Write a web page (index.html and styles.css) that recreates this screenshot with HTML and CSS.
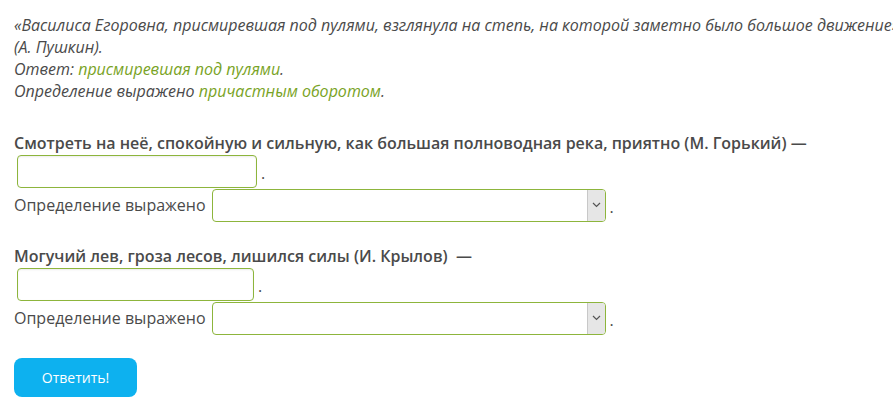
FILE: index.html
```html
<!DOCTYPE html>
<html lang="ru">
<head>
    <meta charset="UTF-8">
    <title>Определение</title>
    <link rel="stylesheet" href="styles.css">
</head>
<body>
    <div class="task">
        <p class="example">
            <span class="quote">«Василиса Егоровна, присмиревшая под пулями, взглянула на степь, на которой заметно было большое движение»</span><br>
            (А. Пушкин).<br>
            Ответ: <span class="green">присмиревшая под пулями</span>.<br>
            Определение выражено <span class="green">причастным оборотом</span>.
        </p>

        <div class="question">
            <p class="q-text">Смотреть на неё, спокойную и сильную, как большая полноводная река, приятно (М. Горький) —</p>
            <div class="row">
                <span class="field"></span><span class="dot">.</span>
            </div>
            <div class="row">
                <span class="label">Определение выражено</span>
                <span class="select"><span class="arrow"><svg width="9" height="6" viewBox="0 0 9 6"><path d="M1 1l3.5 3.5L8 1" fill="none" stroke="#555" stroke-width="1.2"/></svg></span></span><span class="dot">.</span>
            </div>
        </div>

        <div class="question second">
            <p class="q-text">Могучий лев, гроза лесов, лишился силы (И. Крылов)&nbsp; —</p>
            <div class="row">
                <span class="field short"></span><span class="dot">.</span>
            </div>
            <div class="row">
                <span class="label">Определение выражено</span>
                <span class="select"><span class="arrow"><svg width="9" height="6" viewBox="0 0 9 6"><path d="M1 1l3.5 3.5L8 1" fill="none" stroke="#555" stroke-width="1.2"/></svg></span></span><span class="dot">.</span>
            </div>
        </div>

        <button class="submit">Ответить!</button>
    </div>
</body>
</html>
```

FILE: styles.css
```css
body {
    margin: 0;
    font-family: "Open Sans", Arial, sans-serif;
    font-size: 16px;
    color: #4a4a4a;
    background: #fff;
    overflow: hidden;
}
.task {
    padding: 14px 0 0 14px;
}
.example {
    margin: 0;
    font-style: italic;
    line-height: 22px;
}
.quote {
    white-space: nowrap;
}
.green {
    color: #79a325;
}
.question {
    margin-top: 30px;
}
.question.second {
    margin-top: 23px;
}
.q-text {
    margin: 0;
    font-weight: 600;
    line-height: 22px;
    white-space: nowrap;
}
.row {
    display: flex;
    align-items: center;
    height: 34px;
}
.field {
    width: 240px;
    height: 33px;
    box-sizing: border-box;
    margin-left: 3px;
    border: 1px solid #8db53c;
    border-radius: 4px;
    box-shadow: inset 0 1px 2px rgba(0, 0, 0, 0.08);
}
.field.short {
    width: 237px;
}
.dot {
    margin-left: 4px;
    margin-top: 4px;
}
.label {
    margin-right: 6px;
}
.select {
    display: flex;
    justify-content: flex-end;
    width: 394px;
    height: 33px;
    box-sizing: border-box;
    border: 1px solid #8db53c;
    border-radius: 4px;
    overflow: hidden;
}
.arrow {
    display: flex;
    align-items: center;
    justify-content: center;
    width: 17px;
    background: #e6e6e6;
    border-left: 1px solid #c8c8c8;
}
.submit {
    margin-top: 23px;
    width: 123px;
    height: 39px;
    border: none;
    border-radius: 8px;
    background: #0db1ef;
    color: #fff;
    font-family: "Open Sans", Arial, sans-serif;
    font-size: 14px;
    cursor: pointer;
}
```
